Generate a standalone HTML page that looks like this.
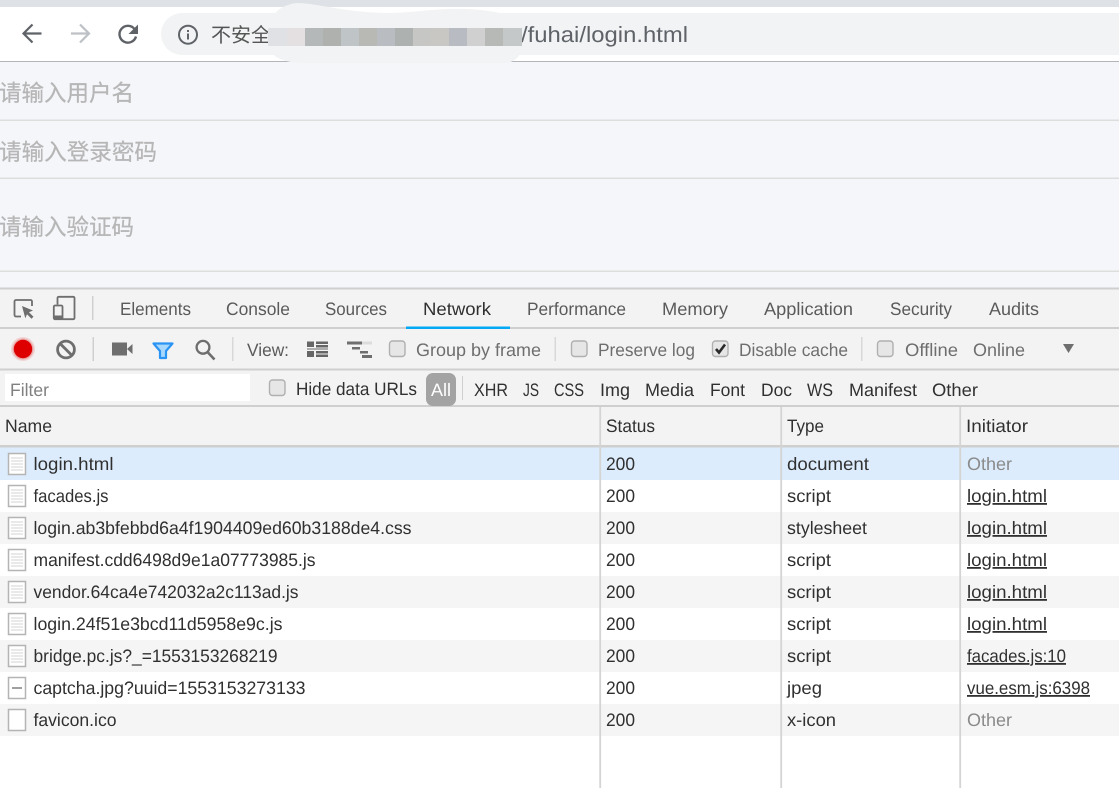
<!DOCTYPE html>
<html><head><meta charset="utf-8"><style>
html,body{margin:0;padding:0;background:#fff;width:1119px;height:788px;overflow:hidden}
svg{display:block;position:absolute;left:0;top:0}
text{font-family:"Liberation Sans","Noto Sans CJK SC",sans-serif;font-size:18px;fill:#333;text-rendering:geometricPrecision}
.t{fill:#5a5a5a}
.d{fill:#303030}
.g{fill:#6e6e6e}
.p{fill:#b6b6b6;font-size:23px;stroke:#b6b6b6;stroke-width:.25px}
.o{fill:#8a8a8a}
.u{text-decoration:underline}
</style></head><body>
<svg width="1119" height="788" viewBox="0 0 1119 788">
<rect width="1119" height="788" fill="#fff"/>
<rect width="1119" height="7" fill="#dee1e6"/>
<rect x="161" y="13" width="980" height="42" rx="21" fill="#f1f3f4"/>
<rect y="61" width="1119" height="1" fill="#b4b4ba"/>
<rect y="62" width="1119" height="226" fill="#f5f6fa"/>
<rect y="119.500" width="1119" height="1.500" fill="#dcdedc"/>
<rect y="177.500" width="1119" height="1.500" fill="#dcdedc"/>
<rect y="270.500" width="1119" height="1.500" fill="#dcdedc"/>
<!-- nav icons -->
<path d="M41.500 33.500H24M32.500 24.500l-9 9 9 9" fill="none" stroke="#5f6368" stroke-width="2.200"/>
<path d="M71 33.500h17.500M80 24.500l9 9-9 9" fill="none" stroke="#bdc1c6" stroke-width="2.200"/>
<path d="M136 36.500a8.400 8.400 0 1 1-1.500-7.500" fill="none" stroke="#5f6368" stroke-width="2.400"/>
<path d="M138 24.500v9.500h-9.500z" fill="#5f6368"/>
<circle cx="188" cy="34.700" r="9" fill="none" stroke="#5f6368" stroke-width="2"/>
<rect x="187" y="33.500" width="2" height="6" fill="#5f6368"/><rect x="187" y="30" width="2" height="2" fill="#5f6368"/>
<text x="211" y="42" style="font-size:20px;fill:#555" textLength="60" lengthAdjust="spacingAndGlyphs">不安全</text>
<!-- blur mosaic -->
<path d="M268 28C270 14 282 4 298 3C320 4 345 12 385 13C415 13 435 8 465 9C490 10 515 13 522 28L522 48C520 56 516 62 505 63L300 63C282 62 270 56 268 46Z" fill="#f2f3f4"/>
<text x="521" y="42" style="font-size:22px;fill:#5f6368" textLength="167" lengthAdjust="spacingAndGlyphs">/fuhai/login.html</text>
<g>
<rect x="268" y="28" width="19" height="18" fill="#dfe1e4"/>
<rect x="287" y="28" width="18" height="18" fill="#e4e0e2"/>
<rect x="305" y="28" width="18" height="18" fill="#b5b8b8"/>
<rect x="323" y="28" width="18" height="18" fill="#afb1ae"/>
<rect x="341" y="28" width="18" height="18" fill="#bfc5c6"/>
<rect x="359" y="28" width="18" height="18" fill="#b8b8b5"/>
<rect x="377" y="28" width="18" height="18" fill="#b9bcc1"/>
<rect x="395" y="28" width="18" height="18" fill="#adb1b0"/>
<rect x="413" y="28" width="18" height="18" fill="#c6c6c4"/>
<rect x="431" y="28" width="18" height="18" fill="#c8c7c3"/>
<rect x="449" y="28" width="18" height="18" fill="#b8bbc1"/>
<rect x="467" y="28" width="18" height="18" fill="#d0d0d1"/>
<rect x="485" y="28" width="18" height="18" fill="#b7b9b6"/>
<rect x="503" y="28" width="19" height="18" fill="#c4c8c8"/>
</g>
<!-- placeholders -->
<text x="-1" y="101" class="p" textLength="135" lengthAdjust="spacingAndGlyphs">请输入用户名</text>
<text x="-1" y="160" class="p" textLength="158" lengthAdjust="spacingAndGlyphs">请输入登录密码</text>
<text x="-1" y="235" class="p" textLength="135" lengthAdjust="spacingAndGlyphs">请输入验证码</text>
<!-- devtools bars -->
<rect y="287.500" width="1119" height="2" fill="#cfcfcf"/>
<rect y="289.500" width="1119" height="37.500" fill="#f3f3f3"/>
<rect y="327" width="1119" height="2" fill="#cfcfcf"/>
<rect y="329" width="1119" height="40" fill="#f3f3f3"/>
<rect y="368.500" width="1119" height="2" fill="#cfcfcf"/>
<rect y="370.500" width="1119" height="35" fill="#f3f3f3"/>
<rect y="405" width="1119" height="2" fill="#cfcfcf"/>
<rect y="407" width="1119" height="38" fill="#f3f3f3"/>
<rect y="445" width="1119" height="2.500" fill="#cfcfcf"/>
<rect x="406" y="326.500" width="104" height="2.500" fill="#03a9f4"/>
<!-- inspect/device icons -->
<path d="M21 316.500h-5a1.500 1.500 0 0 1-1.500-1.500v-13.500a1.500 1.500 0 0 1 1.500-1.500h14.500a1.500 1.500 0 0 1 1.500 1.500v4.500" fill="none" stroke="#6e6e6e" stroke-width="1.800"/>
<path d="M22 306l11 4.500-4 1.700 4.500 4.500-2 2-4.500-4.500-1.700 4z" fill="#6e6e6e"/>
<path d="M57.500 304.500v-6.500a1.200 1.200 0 0 1 1.200-1.200h14.600a1.200 1.200 0 0 1 1.200 1.200v20a1.200 1.200 0 0 1-1.200 1.200H62" fill="none" stroke="#6e6e6e" stroke-width="1.800"/>
<rect x="53.800" y="305.500" width="8.700" height="13.700" rx="1.200" fill="#f3f3f3" stroke="#6e6e6e" stroke-width="1.800"/>
<rect x="54" y="315.500" width="8" height="3.500" fill="#6e6e6e"/>
<rect x="92" y="296" width="1.500" height="24" fill="#d0d0d0"/>
<!-- tabs -->
<text x="120" y="315" class="t" textLength="71" lengthAdjust="spacingAndGlyphs">Elements</text>
<text x="226" y="315" class="t" textLength="64" lengthAdjust="spacingAndGlyphs">Console</text>
<text x="325" y="315" class="t" textLength="62" lengthAdjust="spacingAndGlyphs">Sources</text>
<text x="423" y="315" class="d" textLength="68" lengthAdjust="spacingAndGlyphs">Network</text>
<text x="527" y="315" class="t" textLength="99" lengthAdjust="spacingAndGlyphs">Performance</text>
<text x="662" y="315" class="t" textLength="66" lengthAdjust="spacingAndGlyphs">Memory</text>
<text x="764" y="315" class="t" textLength="89" lengthAdjust="spacingAndGlyphs">Application</text>
<text x="890" y="315" class="t" textLength="62" lengthAdjust="spacingAndGlyphs">Security</text>
<text x="989" y="315" class="t" textLength="50" lengthAdjust="spacingAndGlyphs">Audits</text>
<!-- toolbar icons -->
<circle cx="23" cy="349" r="12" fill="#f0d4d4"/>
<circle cx="23" cy="349" r="10.500" fill="#eba6a6"/>
<circle cx="23" cy="349" r="9.200" fill="#de0000"/>
<circle cx="66" cy="349.500" r="8.400" fill="none" stroke="#6e6e6e" stroke-width="2.800"/>
<path d="M60 343.500l12 12" stroke="#6e6e6e" stroke-width="2.800"/>
<rect x="92.500" y="337" width="1.500" height="24" fill="#d0d0d0"/>
<rect x="112" y="342.500" width="15" height="13" fill="#6e6e6e"/><path d="M127 349l5.500-5v10z" fill="#6e6e6e"/>
<path d="M153.500 343.500h19l-6.500 7.500v7h-6v-7z" fill="#a9d8ff" stroke="#2a94f4" stroke-width="2.200" stroke-linejoin="round"/>
<circle cx="203" cy="347.300" r="6.400" fill="none" stroke="#6e6e6e" stroke-width="2.300"/>
<path d="M207.500 352l7 7.500" stroke="#6e6e6e" stroke-width="2.600"/>
<rect x="232" y="337" width="1.500" height="24" fill="#d8d8d8"/>
<text x="247" y="356" class="t" textLength="42" lengthAdjust="spacingAndGlyphs">View:</text>
<path d="M307 341.500h7v5.500h-7zM316 341.500h12v2.500h-12zM316 345h12v2.500h-12zM307 351h7v6h-7zM316 351h12v2.500h-12zM316 354.500h12v2.500h-12zM307 348.500h21v1h-21z" fill="#666"/>
<path d="M347 341.500h25v3h-25z" fill="#dcdcdc"/>
<path d="M347 341.500h15v3h-15zM352 347h8v2.500h-8zM360 351h8v2.500h-8zM362 355h10v3h-10z" fill="#6e6e6e"/>
<rect x="389.500" y="341" width="15.500" height="15.500" rx="3" fill="#e6e6e6" stroke="#b0b0b0" stroke-width="1.400"/>
<text x="416" y="356" class="g" textLength="125" lengthAdjust="spacingAndGlyphs">Group by frame</text>
<rect x="554.500" y="337" width="1.500" height="24" fill="#d8d8d8"/>
<rect x="571.500" y="341" width="15.500" height="15.500" rx="3" fill="#e6e6e6" stroke="#b0b0b0" stroke-width="1.400"/>
<text x="598" y="356" class="g" textLength="97" lengthAdjust="spacingAndGlyphs">Preserve log</text>
<rect x="712.500" y="341" width="15.500" height="15.500" rx="3" fill="#e6e6e6" stroke="#b0b0b0" stroke-width="1.400"/>
<path d="M716 349l3 3.500 6-8" fill="none" stroke="#2a2a2a" stroke-width="2.600"/>
<text x="739" y="356" class="g" textLength="109" lengthAdjust="spacingAndGlyphs">Disable cache</text>
<rect x="861" y="337" width="1.500" height="24" fill="#d8d8d8"/>
<rect x="877.500" y="341" width="15.500" height="15.500" rx="3" fill="#e6e6e6" stroke="#b0b0b0" stroke-width="1.400"/>
<text x="905" y="356" class="g" textLength="53" lengthAdjust="spacingAndGlyphs">Offline</text>
<text x="973" y="356" class="g" textLength="52" lengthAdjust="spacingAndGlyphs">Online</text>
<path d="M1063 344h11l-5.500 9z" fill="#6e6e6e"/>
<!-- filter bar -->
<rect x="5" y="374" width="245" height="27" fill="#fff"/>
<text x="10" y="396" style="fill:#808080" textLength="39" lengthAdjust="spacingAndGlyphs">Filter</text>
<rect x="269.500" y="380" width="15.500" height="15.500" rx="3" fill="#e6e6e6" stroke="#b0b0b0" stroke-width="1.400"/>
<text x="296" y="395" class="d" textLength="121" lengthAdjust="spacingAndGlyphs">Hide data URLs</text>
<rect x="426" y="373" width="30" height="33" rx="7" fill="#a3a3a3"/>
<text x="431" y="396" style="fill:#fff" textLength="20" lengthAdjust="spacingAndGlyphs">All</text>
<rect x="462" y="376" width="1" height="24" fill="#d0d0d0"/>
<text x="474" y="396" class="d" textLength="34" lengthAdjust="spacingAndGlyphs">XHR</text>
<text x="523" y="396" class="d" textLength="16" lengthAdjust="spacingAndGlyphs">JS</text>
<text x="554" y="396" class="d" textLength="30" lengthAdjust="spacingAndGlyphs">CSS</text>
<text x="600" y="396" class="d" textLength="30" lengthAdjust="spacingAndGlyphs">Img</text>
<text x="645" y="396" class="d" textLength="49" lengthAdjust="spacingAndGlyphs">Media</text>
<text x="710" y="396" class="d" textLength="35" lengthAdjust="spacingAndGlyphs">Font</text>
<text x="761" y="396" class="d" textLength="31" lengthAdjust="spacingAndGlyphs">Doc</text>
<text x="807" y="396" class="d" textLength="26" lengthAdjust="spacingAndGlyphs">WS</text>
<text x="849" y="396" class="d" textLength="68" lengthAdjust="spacingAndGlyphs">Manifest</text>
<text x="932" y="396" class="d" textLength="46" lengthAdjust="spacingAndGlyphs">Other</text>
<!-- table rows -->
<rect y="447.500" width="1119" height="32.500" fill="#dcecfc"/>
<rect y="512" width="1119" height="32" fill="#f5f5f5"/>
<rect y="576" width="1119" height="32" fill="#f5f5f5"/>
<rect y="640" width="1119" height="32" fill="#f5f5f5"/>
<rect y="704" width="1119" height="32" fill="#f5f5f5"/>
<rect x="599.300" y="407" width="1.800" height="381" fill="#d4d4d4"/>
<rect x="780.300" y="407" width="1.800" height="381" fill="#d4d4d4"/>
<rect x="959.300" y="407" width="1.800" height="381" fill="#d4d4d4"/>
<text x="5" y="432" class="d" textLength="47" lengthAdjust="spacingAndGlyphs">Name</text>
<text x="606" y="432" class="d" textLength="49" lengthAdjust="spacingAndGlyphs">Status</text>
<text x="787" y="432" class="d" textLength="37" lengthAdjust="spacingAndGlyphs">Type</text>
<text x="966" y="432" class="d" textLength="62" lengthAdjust="spacingAndGlyphs">Initiator</text>
<!-- file icons -->
<g fill="#fff" stroke="#b4b4b4" stroke-width="1.500">
<rect x="8.500" y="453.500" width="17" height="21"/>
<rect x="8.500" y="485.500" width="17" height="21"/>
<rect x="8.500" y="517.500" width="17" height="21"/>
<rect x="8.500" y="549.500" width="17" height="21"/>
<rect x="8.500" y="581.500" width="17" height="21"/>
<rect x="8.500" y="613.500" width="17" height="21"/>
<rect x="8.500" y="645.500" width="17" height="21"/>
<rect x="8.500" y="677.500" width="17" height="21"/>
<rect x="8.500" y="709.500" width="17" height="21"/>
</g>
<g stroke="#e2e2e2" stroke-width="1.600">
<path d="M11 458h12M11 461h12M11 464h12M11 467h12M11 470h12"/>
<path d="M11 490h12M11 493h12M11 496h12M11 499h12M11 502h12"/>
<path d="M11 522h12M11 525h12M11 528h12M11 531h12M11 534h12"/>
<path d="M11 554h12M11 557h12M11 560h12M11 563h12M11 566h12"/>
<path d="M11 586h12M11 589h12M11 592h12M11 595h12M11 598h12"/>
<path d="M11 618h12M11 621h12M11 624h12M11 627h12M11 630h12"/>
<path d="M11 650h12M11 653h12M11 656h12M11 659h12M11 662h12"/>
</g>
<rect x="12" y="687" width="10" height="2" fill="#a0a0a0"/>
<!-- names -->
<text x="33.500" y="470" class="d" textLength="80" lengthAdjust="spacingAndGlyphs">login.html</text>
<text x="33.500" y="502" class="d" textLength="75" lengthAdjust="spacingAndGlyphs">facades.js</text>
<text x="33.500" y="534" class="d" textLength="378" lengthAdjust="spacingAndGlyphs">login.ab3bfebbd6a4f1904409ed60b3188de4.css</text>
<text x="33.500" y="566" class="d" textLength="282" lengthAdjust="spacingAndGlyphs">manifest.cdd6498d9e1a07773985.js</text>
<text x="33.500" y="598" class="d" textLength="265" lengthAdjust="spacingAndGlyphs">vendor.64ca4e742032a2c113ad.js</text>
<text x="33.500" y="630" class="d" textLength="249" lengthAdjust="spacingAndGlyphs">login.24f51e3bcd11d5958e9c.js</text>
<text x="33.500" y="662" class="d" textLength="244" lengthAdjust="spacingAndGlyphs">bridge.pc.js?_=1553153268219</text>
<text x="33.500" y="694" class="d" textLength="272" lengthAdjust="spacingAndGlyphs">captcha.jpg?uuid=1553153273133</text>
<text x="33.500" y="726" class="d" textLength="83" lengthAdjust="spacingAndGlyphs">favicon.ico</text>
<!-- status -->
<text x="606" y="470" class="d" textLength="29" lengthAdjust="spacingAndGlyphs">200</text>
<text x="606" y="502" class="d" textLength="29" lengthAdjust="spacingAndGlyphs">200</text>
<text x="606" y="534" class="d" textLength="29" lengthAdjust="spacingAndGlyphs">200</text>
<text x="606" y="566" class="d" textLength="29" lengthAdjust="spacingAndGlyphs">200</text>
<text x="606" y="598" class="d" textLength="29" lengthAdjust="spacingAndGlyphs">200</text>
<text x="606" y="630" class="d" textLength="29" lengthAdjust="spacingAndGlyphs">200</text>
<text x="606" y="662" class="d" textLength="29" lengthAdjust="spacingAndGlyphs">200</text>
<text x="606" y="694" class="d" textLength="29" lengthAdjust="spacingAndGlyphs">200</text>
<text x="606" y="726" class="d" textLength="29" lengthAdjust="spacingAndGlyphs">200</text>
<!-- type -->
<text x="787" y="470" class="d" textLength="82" lengthAdjust="spacingAndGlyphs">document</text>
<text x="787" y="502" class="d" textLength="44" lengthAdjust="spacingAndGlyphs">script</text>
<text x="787" y="534" class="d" textLength="80" lengthAdjust="spacingAndGlyphs">stylesheet</text>
<text x="787" y="566" class="d" textLength="44" lengthAdjust="spacingAndGlyphs">script</text>
<text x="787" y="598" class="d" textLength="44" lengthAdjust="spacingAndGlyphs">script</text>
<text x="787" y="630" class="d" textLength="44" lengthAdjust="spacingAndGlyphs">script</text>
<text x="787" y="662" class="d" textLength="44" lengthAdjust="spacingAndGlyphs">script</text>
<text x="787" y="694" class="d" textLength="35" lengthAdjust="spacingAndGlyphs">jpeg</text>
<text x="787" y="726" class="d" textLength="49" lengthAdjust="spacingAndGlyphs">x-icon</text>
<!-- initiator -->
<text x="967" y="470" class="o" textLength="45" lengthAdjust="spacingAndGlyphs">Other</text>
<text x="967" y="502" class="d u" textLength="80" lengthAdjust="spacingAndGlyphs">login.html</text>
<text x="967" y="534" class="d u" textLength="80" lengthAdjust="spacingAndGlyphs">login.html</text>
<text x="967" y="566" class="d u" textLength="80" lengthAdjust="spacingAndGlyphs">login.html</text>
<text x="967" y="598" class="d u" textLength="80" lengthAdjust="spacingAndGlyphs">login.html</text>
<text x="967" y="630" class="d u" textLength="80" lengthAdjust="spacingAndGlyphs">login.html</text>
<text x="967" y="662" class="d u" textLength="99" lengthAdjust="spacingAndGlyphs">facades.js:10</text>
<text x="967" y="694" class="d u" textLength="123" lengthAdjust="spacingAndGlyphs">vue.esm.js:6398</text>
<text x="967" y="726" class="o" textLength="45" lengthAdjust="spacingAndGlyphs">Other</text>
</svg>
</body></html>
